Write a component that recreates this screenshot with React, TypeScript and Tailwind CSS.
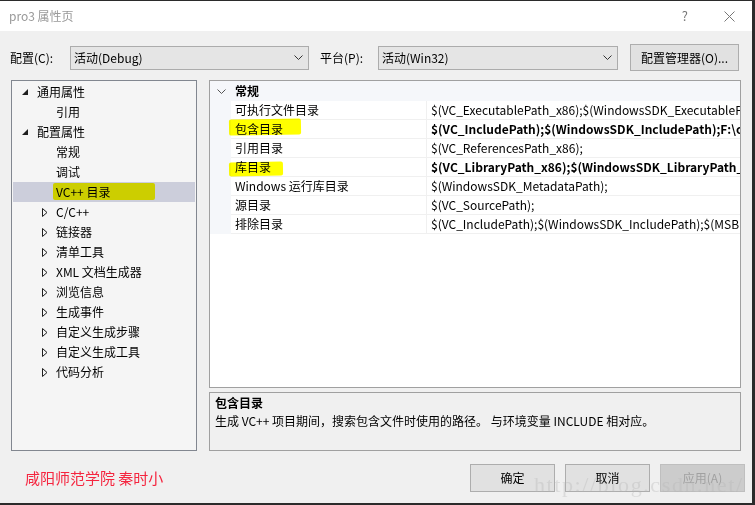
import React from 'react';

type TreeItem = {
  label: string;
  level: 0 | 1;
  expanded?: boolean;
  collapsed?: boolean;
  selected?: boolean;
};

const tree: TreeItem[] = [
  { label: '通用属性', level: 0, expanded: true },
  { label: '引用', level: 1 },
  { label: '配置属性', level: 0, expanded: true },
  { label: '常规', level: 1 },
  { label: '调试', level: 1 },
  { label: 'VC++ 目录', level: 1, selected: true },
  { label: 'C/C++', level: 1, collapsed: true },
  { label: '链接器', level: 1, collapsed: true },
  { label: '清单工具', level: 1, collapsed: true },
  { label: 'XML 文档生成器', level: 1, collapsed: true },
  { label: '浏览信息', level: 1, collapsed: true },
  { label: '生成事件', level: 1, collapsed: true },
  { label: '自定义生成步骤', level: 1, collapsed: true },
  { label: '自定义生成工具', level: 1, collapsed: true },
  { label: '代码分析', level: 1, collapsed: true },
];

const props = [
  { name: '可执行文件目录', value: '$(VC_ExecutablePath_x86);$(WindowsSDK_ExecutablePath);$(VS_ExecutablePath);$(MSBuild_ExecutablePath)' },
  { name: '包含目录', value: '$(VC_IncludePath);$(WindowsSDK_IncludePath);F:\\opencv\\build\\include', bold: true },
  { name: '引用目录', value: '$(VC_ReferencesPath_x86);' },
  { name: '库目录', value: '$(VC_LibraryPath_x86);$(WindowsSDK_LibraryPath_x86);F:\\opencv\\build\\x64\\lib', bold: true },
  { name: 'Windows 运行库目录', value: '$(WindowsSDK_MetadataPath);' },
  { name: '源目录', value: '$(VC_SourcePath);' },
  { name: '排除目录', value: '$(VC_IncludePath);$(WindowsSDK_IncludePath);$(MSBuild_ExecutablePath);$(VC_LibraryPath_x86)' },
];

const ExpandedArrow = () => (
  <svg width="6" height="6" viewBox="0 0 6 6" className="block">
    <polygon points="6,0 6,6 0,6" fill="#1e1e1e" />
  </svg>
);

const CollapsedArrow = () => (
  <svg width="6" height="9" viewBox="0 0 6 9" className="block">
    <polygon points="0.5,0.5 5,4.5 0.5,8.5" fill="none" stroke="#1e1e1e" strokeWidth="1" />
  </svg>
);

const Chevron = ({ color = '#333' }: { color?: string }) => (
  <svg width="9" height="5" viewBox="0 0 9 5" className="block">
    <polyline points="0.5,0.5 4.5,4.5 8.5,0.5" fill="none" stroke={color} strokeWidth="1" />
  </svg>
);

const Select = ({ value, width }: { value: string; width: string }) => (
  <div className={`${width} h-[24px] flex items-center justify-between border border-[#acacac] bg-[#e5e5e5] pl-[3px] pr-[5px]`}>
    <span>{value}</span>
    <Chevron />
  </div>
);

const Button = ({ label, disabled }: { label: string; disabled?: boolean }) => (
  <div
    className={
      disabled
        ? 'w-[85px] h-[28px] flex items-center justify-center border border-[#bfbfbf] bg-[#cccccc] text-[#a0a0a0]'
        : 'w-[85px] h-[28px] flex items-center justify-center border border-[#adadad] bg-[#e1e1e1]'
    }
  >
    {label}
  </div>
);

export default function App() {
  return (
    <div className="relative w-[755px] h-[505px] overflow-hidden flex bg-[#2b2b2b] text-[12px] text-black font-['Noto_Sans_CJK_SC','Noto_Sans',sans-serif]">
      <div className="w-[752px] h-[502px] mt-px flex flex-col bg-[#f0f0f0]">
        {/* Title bar */}
        <div className="h-[30px] flex items-center bg-white pl-[9px] pr-[17px]">
          <span className="text-[#999999]">pro3 属性页</span>
          <span className="ml-auto text-[13px] text-[#777777] mr-[36px]">?</span>
          <svg width="11" height="11" viewBox="0 0 11 11" className="block">
            <line x1="0.5" y1="0.5" x2="10.5" y2="10.5" stroke="#777" strokeWidth="1" />
            <line x1="10.5" y1="0.5" x2="0.5" y2="10.5" stroke="#777" strokeWidth="1" />
          </svg>
        </div>

        {/* Configuration row */}
        <div className="mt-[13px] h-[27px] flex items-center pl-[10px]">
          <span className="w-[60px]">配置(C):</span>
          <Select value="活动(Debug)" width="w-[239px]" />
          <span className="w-[58px] ml-[11px]">平台(P):</span>
          <Select value="活动(Win32)" width="w-[240px]" />
          <div className="ml-[12px] w-[109px] h-[27px] flex items-center justify-center border border-[#adadad] bg-[#e1e1e1]">
            配置管理器(O)...
          </div>
        </div>

        {/* Main panels */}
        <div className="mt-[9px] flex pl-[11px] gap-[12px]">
          {/* Tree */}
          <div className="w-[186px] h-[371px] border border-[#828790] bg-[#f5f5f5] px-px pt-px">
            {tree.map((item) => (
              <div
                key={item.label}
                className={`relative h-[20px] flex items-center ${item.level === 0 ? 'pl-[9px]' : 'pl-[29px]'} ${item.selected ? 'bg-[#cccedb]' : ''}`}
              >
                {item.selected && (
                  <span className="absolute left-[40px] top-[1px] w-[102px] h-[17px] bg-[#ffff00] mix-blend-multiply rounded-[2px]" />
                )}
                <span className={`flex items-center ${item.level === 0 ? 'w-[15px]' : 'w-[14px]'}`}>
                  {item.expanded && <ExpandedArrow />}
                  {item.collapsed && <CollapsedArrow />}
                </span>
                <span className="relative">{item.label}</span>
              </div>
            ))}
          </div>

          {/* Right column */}
          <div className="w-[532px] flex flex-col gap-[4px]">
            <div className="relative h-[308px] border border-[#a0a0a0] bg-white overflow-hidden">
              <div className="h-[20px] flex items-center bg-[#f5f7fa]">
                <span className="w-[21px] flex justify-center pl-[1px]">
                  <Chevron color="#555" />
                </span>
                <span className="font-bold pl-[4px]">常规</span>
              </div>
              {props.map((p) => (
                <div key={p.name} className="h-[19px] flex">
                  <div className="w-[21px] bg-[#f5f7fa]" />
                  <div className="w-[195px] flex items-center pl-[4px] border-b border-[#f0f0f0] whitespace-nowrap">
                    {p.name}
                  </div>
                  <div
                    className={`flex-1 flex items-center pl-[4px] border-b border-l border-[#f0f0f0] whitespace-nowrap overflow-hidden ${p.bold ? 'font-bold' : ''}`}
                  >
                    {p.value}
                  </div>
                </div>
              ))}
              {/* marker highlights */}
              <span className="absolute left-[19px] top-[38px] w-[72px] h-[16px] bg-[#ffff00] mix-blend-multiply rounded-[2px] -rotate-1" />
              <span className="absolute left-[19px] top-[81px] w-[54px] h-[14px] bg-[#ffff00] mix-blend-multiply rounded-[2px] -rotate-1" />
            </div>
            <div className="h-[59px] border border-[#a0a0a0] bg-[#f0f0f0] pl-[5px] pt-px leading-[18px]">
              <div className="font-bold">包含目录</div>
              <div>生成 VC++ 项目期间，搜索包含文件时使用的路径。 与环境变量 INCLUDE 相对应。</div>
            </div>
          </div>
        </div>

        {/* Footer */}
        <div className="mt-[13px] h-[28px] flex items-center pl-[25px] pr-[7px]">
          <span className="text-[15px] text-[#f5253f]">咸阳师范学院 秦时小</span>
          <div className="ml-auto flex gap-[10px]">
            <Button label="确定" />
            <Button label="取消" />
            <Button label="应用(A)" disabled />
          </div>
        </div>
      </div>

      {/* csdn watermark */}
      <span className="absolute left-[534px] top-[468px] text-[22px] tracking-[1.6px] text-[#b4b4b4]/35 font-['Liberation_Serif',serif] pointer-events-none">
        http://blog.csdn.net/
      </span>
    </div>
  );
}
